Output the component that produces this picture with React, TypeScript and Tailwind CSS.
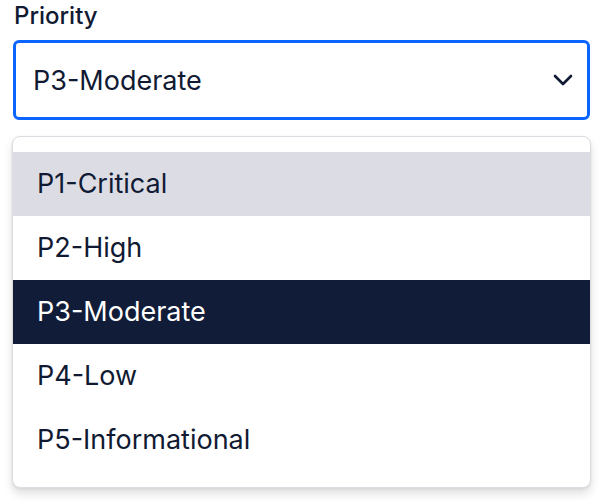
import React from "react";

const options = ["P1-Critical", "P2-High", "P3-Moderate", "P4-Low", "P5-Informational"];

export default function App() {
  return (
    <div className="w-[602px] h-[504px] bg-white overflow-hidden text-[#111a33]" style={{ fontFamily: "Inter, 'Noto Sans', sans-serif" }}>
      <div className="pl-[14px] pt-[1px] h-[40px] text-[24px] font-medium leading-[30px]">Priority</div>
      <div className="ml-[13px] w-[577px] h-[80px] border-[3px] border-[#0a66ff] rounded-[6px] flex items-center justify-between pl-[17px] pr-[14px]">
        <span className="text-[27px] leading-none">P3-Moderate</span>
        <svg width="20" height="12" viewBox="0 0 20 12" fill="none">
          <path d="M2 2l8 8 8-8" stroke="#111a33" strokeWidth="2.6" strokeLinecap="round" strokeLinejoin="round" />
        </svg>
      </div>
      <div className="ml-[12px] mt-[16px] w-[579px] border border-[#dcdce2] rounded-[8px] py-[15px] bg-white shadow-[0_6px_10px_rgba(0,0,0,0.12),0_1px_3px_rgba(0,0,0,0.08)]">
        {options.map((o, i) => (
          <div
            key={o}
            className={
              "h-[64px] flex items-center pl-[24px] text-[27px] " +
              (i === 0 ? "bg-[#dcdce5]" : i === 2 ? "bg-[#111c38] text-white" : "")
            }
          >
            {o}
          </div>
        ))}
      </div>
    </div>
  );
}
